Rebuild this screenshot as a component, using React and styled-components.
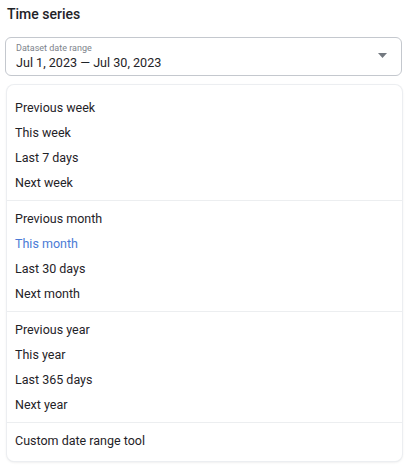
import styled, { createGlobalStyle } from "styled-components";

const GlobalStyle = createGlobalStyle`
    body {
        margin: 0;
        background: #ffffff;
        font-family: Roboto, "Liberation Sans", sans-serif;
    }
`

const Page = styled.div`
    width: 407px;
    padding: 5px 5px 8px 5px;
    box-sizing: border-box;
`

const Title = styled.h2`
    margin: 0 0 14px 2px;
    font-size: 14px;
    line-height: 18px;
    font-weight: 500;
    color: #1f2328;
`

const Select = styled.div`
    height: 39px;
    border: 1px solid #c4c8ce;
    border-radius: 6px;
    box-sizing: border-box;
    display: flex;
    align-items: center;
    padding: 0 14px 0 10px;
`

const SelectText = styled.div`
    flex: 1;
    display: flex;
    flex-direction: column;
`

const SelectLabel = styled.span`
    font-size: 9px;
    line-height: 11px;
    color: #7d838b;
`

const SelectValue = styled.span`
    font-size: 12.6px;
    line-height: 17px;
    color: #1f2328;
`

const Arrow = styled.svg`
    width: 9px;
    height: 5px;
    margin-top: -2px;
`

const Menu = styled.div`
    margin: 9px 0 0 2px;
    border-radius: 7px;
    background: #ffffff;
    box-shadow: 0 0 0 1px #eceef1, 0 1px 3px rgba(0, 0, 0, 0.12);
    padding: 5px 0 3px;
`

const Group = styled.div`
    padding: 5px 0;
    &:not(:last-child) {
        border-bottom: 1px solid #eceef0;
    }
`

const Item = styled.div`
    height: 25px;
    display: flex;
    align-items: center;
    padding: 0 8px;
    font-size: 12.5px;
    color: ${props => props.active ? '#4a7bd6' : '#1f2328'};
    cursor: pointer;
`

const groups = [
    ['Previous week', 'This week', 'Last 7 days', 'Next week'],
    ['Previous month', 'This month', 'Last 30 days', 'Next month'],
    ['Previous year', 'This year', 'Last 365 days', 'Next year'],
    ['Custom date range tool'],
];

const selected = 'This month';

function App() {
    return (
        <Page>
            <GlobalStyle />
            <Title>Time series</Title>
            <Select>
                <SelectText>
                    <SelectLabel>Dataset date range</SelectLabel>
                    <SelectValue>Jul 1, 2023 — Jul 30, 2023</SelectValue>
                </SelectText>
                <Arrow viewBox="0 0 9 5">
                    <path d="M0 0 L9 0 L4.5 5 Z" fill="#737980" />
                </Arrow>
            </Select>
            <Menu>
                { groups.map((group, index) => (
                    <Group key={index}>
                        { group.map(item => (
                            <Item key={item} active={item === selected}>{item}</Item>
                        ))}
                    </Group>
                ))}
            </Menu>
        </Page>
    )
}

export default App;
